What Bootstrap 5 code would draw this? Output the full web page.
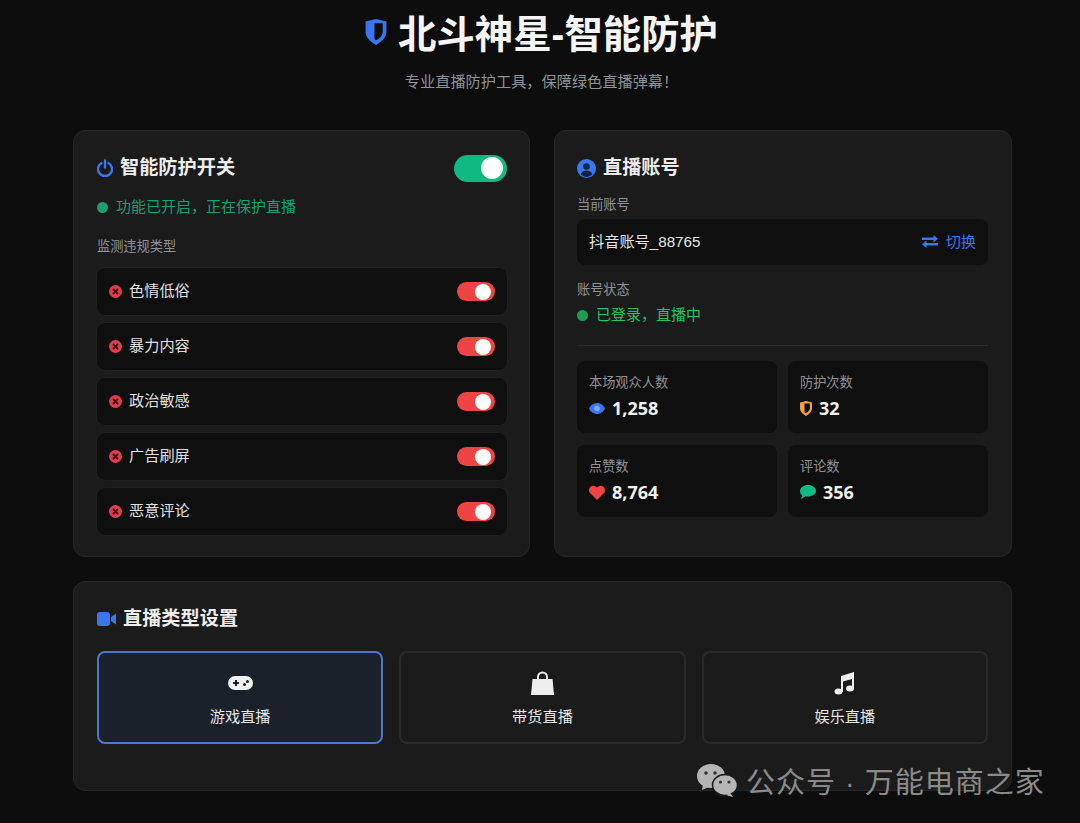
<!DOCTYPE html>
<html lang="zh-CN">
<head>
    <meta charset="UTF-8">
    <meta name="viewport" content="width=device-width, initial-scale=1.0">
    <title>北斗神星-智能防护</title>
    <link href="https://cdn.jsdelivr.net/npm/bootstrap@5.3.0/dist/css/bootstrap.min.css" rel="stylesheet">
    <style>
        :root {
            --page-bg: #0d0d0e;
            --panel-bg: #1b1b1c;
            --inset-bg: #0f0f10;
            --line: #262628;
            --blue: #3b76f0;
            --green: #10b981;
            --red: #ef4444;
        }

        html, body {
            height: 823px;
            overflow: hidden;
        }

        body {
            background: var(--page-bg);
            color: #e8e8e8;
            font-family: "Liberation Sans", "Noto Sans CJK SC", sans-serif;
            position: relative;
        }

        .page-wrap {
            width: 939px;
            margin-left: 73px;
        }

        .page-head {
            height: 130px;
            padding-top: 11px;
            text-align: center;
        }

        .page-title {
            font-size: 38.4px;
            font-weight: 700;
            line-height: 48px;
            color: #f5f5f5;
            margin: 0 0 13px;
            padding-right: 2px;
        }

        .page-title svg {
            width: 22px;
            height: 26px;
            margin-right: 11px;
            vertical-align: 3px;
        }

        .page-sub {
            font-size: 15.2px;
            line-height: 20px;
            color: #8f9296;
            margin: 0;
            padding-right: 2px;
        }

        .panel-grid {
            display: grid;
            grid-template-columns: 457px 458px;
            gap: 24px;
        }

        .panel-box {
            background: var(--panel-bg);
            border: 1px solid var(--line);
            border-radius: 12px;
            padding: 23px;
        }

        .panel-title {
            font-size: 19.2px;
            font-weight: 700;
            line-height: 28px;
            color: #ededed;
            margin: 0;
        }

        .title-icon {
            margin-right: 7px;
        }

        .top-box {
            height: 427px;
        }

        .left-box {
            padding-right: 22px;
        }

        .right-box {
            padding-left: 22px;
        }

        .status-line {
            font-size: 15px;
            line-height: 20px;
        }

        .status-dot {
            width: 11px;
            height: 11px;
            border-radius: 50%;
            display: inline-block;
            margin-right: 8px;
        }

        .field-label {
            font-size: 13.2px;
            line-height: 20px;
            color: #8f9296;
        }

        .rule-list {
            display: flex;
            flex-direction: column;
            gap: 8px;
            margin-top: 11px;
        }

        .rule-row {
            height: 47px;
            background: var(--inset-bg);
            border-radius: 8px;
            padding: 0 12px;
            font-size: 15.2px;
            color: #e0e0e0;
            box-shadow: 0 0 0 1px #202021;
        }

        .rule-icon {
            margin-right: 7px;
        }

        .switch-track {
            display: block;
            border-radius: 999px;
            position: relative;
        }

        .switch-track::after {
            content: "";
            position: absolute;
            border-radius: 50%;
            background: #fff;
        }

        .switch-big {
            width: 53px;
            height: 27px;
            background: var(--green);
        }

        .switch-big::after {
            width: 22px;
            height: 22px;
            top: 2.5px;
            right: 4px;
        }

        .switch-small {
            width: 38px;
            height: 19px;
            background: var(--red);
        }

        .switch-small::after {
            width: 16px;
            height: 16px;
            top: 1.5px;
            right: 4px;
        }

        .account-field {
            height: 46px;
            background: var(--inset-bg);
            border-radius: 8px;
            padding: 0 12px;
            font-size: 15.2px;
            color: #e4e4e4;
        }

        .switch-link {
            color: var(--blue);
        }

        .stat-grid {
            display: grid;
            grid-template-columns: 200px 200px;
            gap: 12px 11px;
        }

        .stat-box {
            height: 72px;
            background: var(--inset-bg);
            border-radius: 8px;
            padding: 12px;
        }

        .stat-num {
            font-family: "Open Sans", "Liberation Sans", sans-serif;
            font-size: 18px;
            font-weight: 700;
            line-height: 28px;
            color: #f0f0f0;
            margin-top: 1px;
        }

        .stat-icon {
            margin-right: 7px;
        }

        .divider-line {
            border-top: 1px solid #2b2b2d;
            margin: 20px 0 15px;
        }

        .status-left {
            margin-top: 15px;
        }

        .label-left {
            margin-top: 20px;
        }

        .label-account {
            margin-top: 13px;
            margin-bottom: 4px;
        }

        .label-state {
            margin-top: 15px;
        }

        .status-right {
            margin-top: 5px;
        }

        .bottom-box {
            height: 210px;
            margin-top: 24px;
        }

        .type-grid {
            display: grid;
            grid-template-columns: 1fr 1fr 1fr;
            gap: 16px;
            margin-top: 18px;
        }

        .type-btn {
            height: 93px;
            border: 2px solid #2a2a2c;
            border-radius: 8px;
            font-size: 15.2px;
            line-height: 23px;
            color: #e4e4e4;
            background: var(--panel-bg);
            padding-top: 18px;
        }

        .type-btn.is-on {
            border-color: #4a78cf;
            background: #1a212b;
        }

        .type-icon {
            height: 24px;
            margin-bottom: 10px;
        }

        .wm-mark {
            position: absolute;
            left: 697px;
            top: 764px;
            font-size: 29px;
            line-height: 36px;
            color: #8a8a8a;
            letter-spacing: 1px;
            white-space: nowrap;
        }

        .wm-icon {
            margin-right: 8px;
            margin-bottom: 4px;
        }
    </style>
</head>
<body>
    <div class="page-wrap">
        <!-- Header -->
        <header class="page-head">
            <h1 class="page-title">
                <svg viewBox="0 0 20 25"><path fill="#3b76f0" fill-rule="evenodd" d="M0 2.500 10 0l10 2.500V12c0 6-5 10-10 13C5 22 0 18 0 12ZM8.500 4v14c0 1 .5 2 1.500 2.500 3-1.500 6.500-4.500 6.500-8.500V4Z"/></svg>北斗神星-智能防护
            </h1>
            <p class="page-sub">专业直播防护工具，保障绿色直播弹幕！</p>
        </header>

        <div class="panel-grid">
            <!-- Protection switches -->
            <section class="panel-box top-box left-box">
                <div class="d-flex align-items-center justify-content-between">
                    <h2 class="panel-title d-flex align-items-center">
                        <svg class="title-icon" width="16" height="18" viewBox="0 0 16 18" fill="none" stroke="#3b76f0" stroke-width="2.400" stroke-linecap="round"><path d="M4.500 4a7 7 0 1 0 7 0M8 1.500v7"/></svg>智能防护开关
                    </h2>
                    <span class="switch-track switch-big"></span>
                </div>
                <div class="status-line status-left d-flex align-items-center" style="color:#10a374">
                    <span class="status-dot" style="background:#1f9d6b"></span>功能已开启，正在保护直播
                </div>
                <div class="field-label label-left">监测违规类型</div>
                <div class="rule-list" id="ruleList"></div>
            </section>

            <!-- Account -->
            <section class="panel-box top-box right-box">
                <h2 class="panel-title d-flex align-items-center">
                    <svg class="title-icon" width="19" height="19" viewBox="0 0 19 19"><circle cx="9.500" cy="9.500" r="9.500" fill="#3b76f0"/><circle cx="9.500" cy="7.500" r="3.300" fill="#14233f"/><path fill="#14233f" d="M3.800 15.500c.8-3 3-4 5.700-4s4.900 1 5.700 4a8 8 0 0 1-11.400 0Z"/></svg>直播账号
                </h2>
                <div class="field-label label-account">当前账号</div>
                <div class="account-field d-flex align-items-center justify-content-between">
                    <span>抖音账号_88765</span>
                    <span class="switch-link d-flex align-items-center">
                        <svg class="me-2" width="16" height="13" viewBox="0 0 16 13" fill="#3b76f0"><path d="M0 2.500h11.500V0L16 3.800l-4.500 3.700V5H0ZM16 8H4.500V5.500L0 9.300 4.500 13v-2.500H16Z"/></svg>切换
                    </span>
                </div>
                <div class="field-label label-state">账号状态</div>
                <div class="status-line status-right d-flex align-items-center" style="color:#22c55e">
                    <span class="status-dot" style="background:#1f9d55"></span>已登录，直播中
                </div>
                <div class="divider-line"></div>
                <div class="stat-grid">
                    <div class="stat-box">
                        <div class="field-label">本场观众人数</div>
                        <div class="stat-num d-flex align-items-center">
                            <svg class="stat-icon" width="16" height="11" viewBox="0 0 16 11"><path fill="#3b76f0" d="M8 0c3.600 0 6.500 2.300 8 5.500C14.500 8.700 11.600 11 8 11S1.500 8.700 0 5.500C1.500 2.300 4.400 0 8 0Z"/><circle cx="8" cy="5.500" r="2.800" fill="#7fa6f5"/></svg>1,258
                        </div>
                    </div>
                    <div class="stat-box">
                        <div class="field-label">防护次数</div>
                        <div class="stat-num d-flex align-items-center">
                            <svg class="stat-icon" width="12" height="15" viewBox="0 0 20 25"><path fill="#f0a040" fill-rule="evenodd" d="M0 2.500 10 0l10 2.500V12c0 6-5 10-10 13C5 22 0 18 0 12ZM7.500 4v14c0 1 .5 2 1.500 2.500 3-1.500 7.500-4.500 7.500-8.500V4Z"/></svg>32
                        </div>
                    </div>
                    <div class="stat-box">
                        <div class="field-label">点赞数</div>
                        <div class="stat-num d-flex align-items-center">
                            <svg class="stat-icon" width="16" height="15" viewBox="0 0 16 15"><path fill="#ef4444" d="M8 15 1.300 8.300C-.4 6.600-.4 3.800 1.200 2c1.700-1.700 4.500-1.700 6.100 0l.7.700.7-.7c1.600-1.700 4.400-1.700 6.100 0 1.600 1.800 1.600 4.600-.1 6.300Z"/></svg>8,764
                        </div>
                    </div>
                    <div class="stat-box">
                        <div class="field-label">评论数</div>
                        <div class="stat-num d-flex align-items-center">
                            <svg class="stat-icon" width="16" height="14" viewBox="0 0 16 14"><path fill="#10b981" d="M8 0c4.400 0 8 2.600 8 5.800s-3.600 5.800-8 5.800c-1 0-1.900-.1-2.800-.4C4.200 12.200 2.700 13.400.8 14c.7-1 1.200-2.200 1.300-3.500C.8 9.400 0 7.700 0 5.800 0 2.600 3.600 0 8 0Z"/></svg>356
                        </div>
                    </div>
                </div>
            </section>
        </div>

        <!-- Live type -->
        <section class="panel-box bottom-box">
            <h2 class="panel-title d-flex align-items-center">
                <svg class="title-icon" width="19" height="14" viewBox="0 0 19 14" fill="#3b76f0"><rect width="13" height="14" rx="3"/><path d="m14 5 5-3.500v11L14 9Z"/></svg>直播类型设置
            </h2>
            <div class="type-grid">
                <div class="type-btn is-on d-flex flex-column align-items-center">
                    <div class="type-icon d-flex align-items-center">
                        <svg width="25" height="16" viewBox="0 0 25 16"><rect y="1" width="25" height="14" rx="7" fill="#f0f0f0"/><path stroke="#1a212b" stroke-width="2" d="M5 8h6M8 5v6"/><circle cx="16.500" cy="9.500" r="1.500" fill="#1a212b"/><circle cx="19.500" cy="6.500" r="1.500" fill="#1a212b"/></svg>
                    </div>
                    <span>游戏直播</span>
                </div>
                <div class="type-btn d-flex flex-column align-items-center">
                    <div class="type-icon d-flex align-items-center">
                        <svg width="23" height="24" viewBox="0 0 23 24"><path fill="none" stroke="#eee" stroke-width="2" d="M7 9V6a4.500 4.500 0 0 1 9 0v3"/><path fill="#eee" d="M1.500 8h20l1.500 16H0Z"/></svg>
                    </div>
                    <span>带货直播</span>
                </div>
                <div class="type-btn d-flex flex-column align-items-center">
                    <div class="type-icon d-flex align-items-center">
                        <svg width="21" height="23" viewBox="0 0 21 23" fill="#eee"><path d="M7 4 20 0v17h-2V7L9 9.500V20H7Z"/><ellipse cx="4.500" cy="19.500" rx="4" ry="3"/><ellipse cx="16" cy="16.500" rx="4" ry="3"/></svg>
                    </div>
                    <span>娱乐直播</span>
                </div>
            </div>
        </section>
    </div>

    <!-- Watermark over the page -->
    <div class="wm-mark d-flex align-items-center">
        <svg class="wm-icon" width="41" height="33" viewBox="0 0 41 33"><ellipse cx="14" cy="12" rx="14" ry="12" fill="#b5b5b5"/><path fill="#b5b5b5" d="m6 20-1 6 7-3Z"/><ellipse cx="28" cy="21" rx="12.500" ry="10.500" fill="#b5b5b5" stroke="#1b1b1c" stroke-width="1.500"/><path fill="#b5b5b5" d="m33 29 3 4-7-2Z"/><circle cx="9" cy="9" r="1.800" fill="#333"/><circle cx="18" cy="9" r="1.800" fill="#333"/><circle cx="23.500" cy="18" r="1.600" fill="#333"/><circle cx="32" cy="18" r="1.600" fill="#333"/></svg>公众号 · 万能电商之家
    </div>

    <script src="https://cdn.jsdelivr.net/npm/bootstrap@5.3.0/dist/js/bootstrap.bundle.min.js"></script>
    <script>
        // Rule rows
        const rules = ['色情低俗', '暴力内容', '政治敏感', '广告刷屏', '恶意评论'];
        const ruleList = document.getElementById('ruleList');
        rules.forEach(rule => {
            ruleList.innerHTML += `
                <div class="rule-row d-flex align-items-center justify-content-between">
                    <span class="d-flex align-items-center">
                        <svg class="rule-icon" width="13" height="13" viewBox="0 0 13 13"><circle cx="6.500" cy="6.500" r="6.500" fill="#dc3f4f"/><path stroke="#4a1016" stroke-width="2" stroke-linecap="round" d="m4.500 4.500 4 4m0-4-4 4"/></svg>${rule}
                    </span>
                    <span class="switch-track switch-small"></span>
                </div>
            `;
        });
    </script>
</body>
</html>
